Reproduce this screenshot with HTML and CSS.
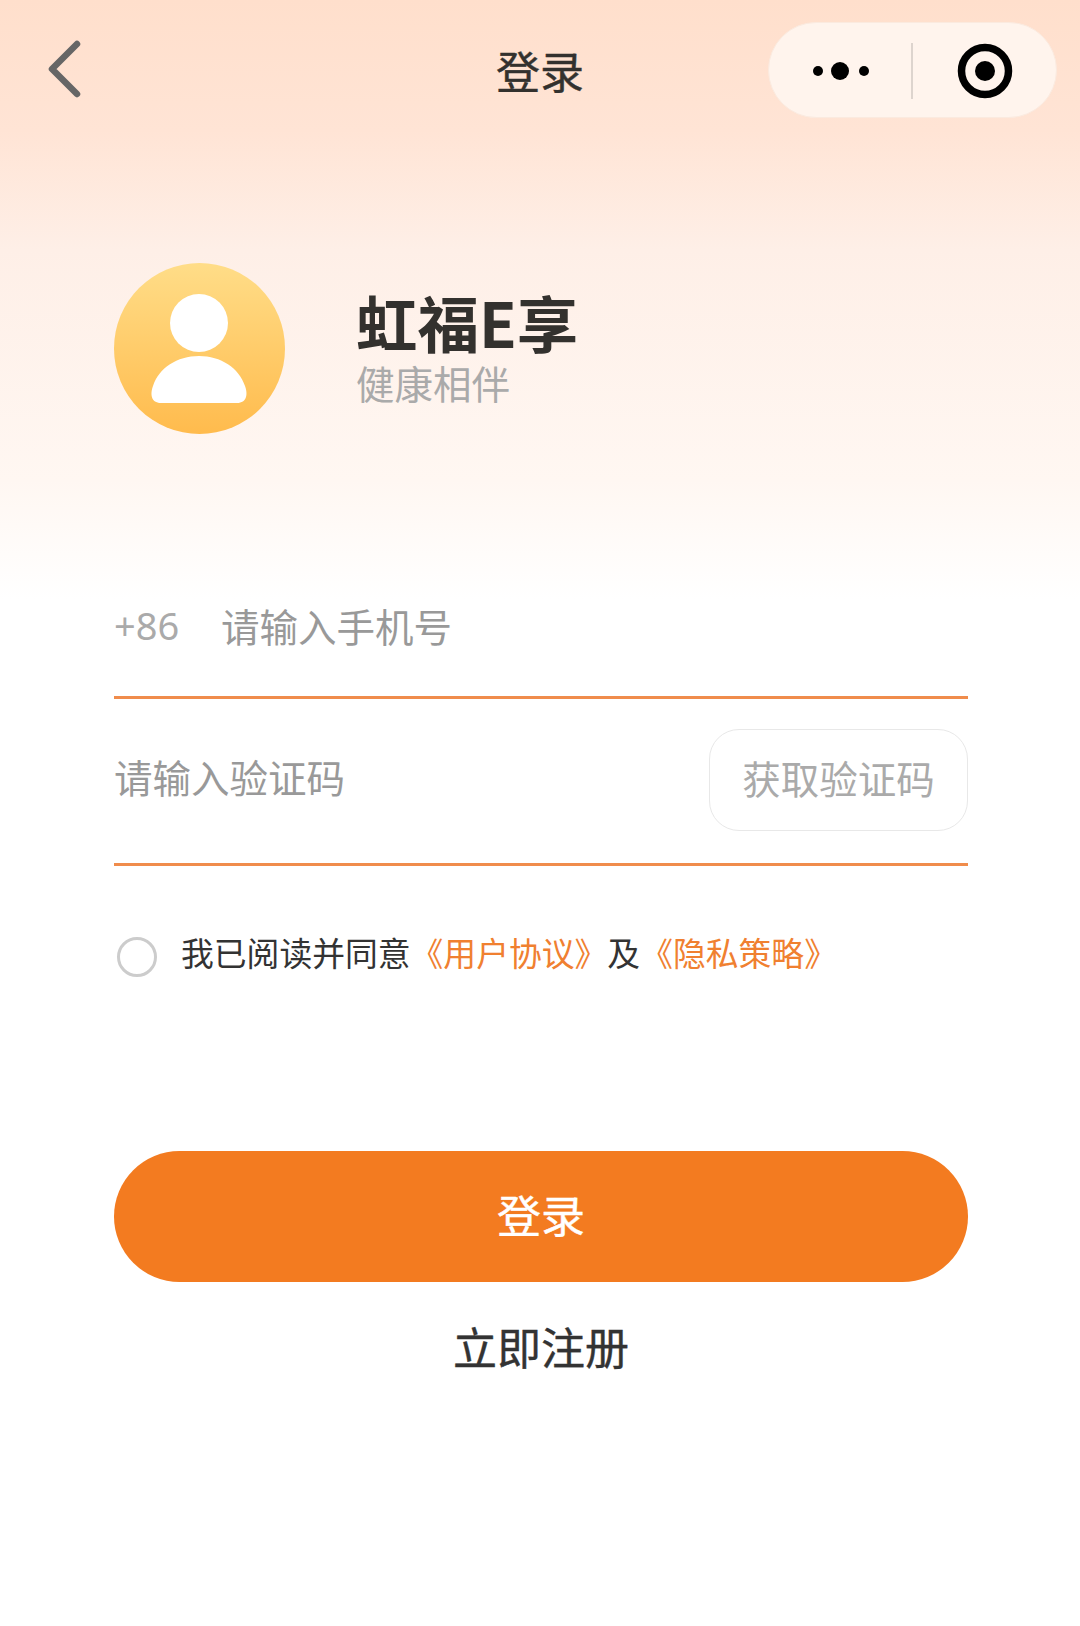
FILE: index.html
```html
<!DOCTYPE html>
<html lang="zh-CN">
<head>
    <meta charset="UTF-8">
    <meta name="viewport" content="width=device-width, initial-scale=1.0">
    <title>登录</title>
    <link rel="stylesheet" href="styles.css">
</head>
<body>
    <div class="page">
        <header class="nav">
            <a href="#" class="nav-back" aria-label="返回">
                <svg width="40" height="64" viewBox="0 0 40 64">
                    <path d="M35 7 L10 32 L35 57" fill="none" stroke="#666" stroke-width="6.5" stroke-linecap="round" stroke-linejoin="round"/>
                </svg>
            </a>
            <div class="nav-title">登录</div>
            <div class="capsule">
                <svg class="capsule-more" width="60" height="20" viewBox="0 0 60 20">
                    <circle cx="6" cy="10" r="5" fill="#000"/>
                    <circle cx="28" cy="10" r="9" fill="#000"/>
                    <circle cx="52" cy="10" r="5" fill="#000"/>
                </svg>
                <span class="capsule-line"></span>
                <svg class="capsule-close" width="56" height="56" viewBox="0 0 56 56">
                    <circle cx="28" cy="28" r="23.5" fill="none" stroke="#000" stroke-width="7.5"/>
                    <circle cx="28" cy="28" r="10" fill="#000"/>
                </svg>
            </div>
        </header>

        <section class="brand">
            <div class="avatar">
                <svg width="100" height="110" viewBox="0 0 100 110">
                    <circle cx="49" cy="29" r="29" fill="#fff"/>
                    <path d="M11 109 C1 109 0 100 3 92 C9 74 27 62 49 62 C71 62 89 74 95 92 C98 100 97 109 87 109 Z" fill="#fff"/>
                </svg>
            </div>
            <div class="brand-text">
                <div class="brand-name">虹福E享</div>
                <div class="brand-sub">健康相伴</div>
            </div>
        </section>

        <form class="form">
            <div class="field field-phone">
                <span class="code">+86</span>
                <span class="hint">请输入手机号</span>
            </div>
            <div class="field field-sms">
                <span class="hint">请输入验证码</span>
                <button type="button" class="btn-code">获取验证码</button>
            </div>
            <div class="agree">
                <span class="radio"></span>
                <span class="agree-text">我已阅读并同意<a href="#">《用户协议》</a>及<a href="#">《隐私策略》</a></span>
            </div>
            <button type="submit" class="btn-login">登录</button>
            <a href="#" class="register">立即注册</a>
        </form>
    </div>
</body>
</html>
```

FILE: styles.css
```css
* {
    box-sizing: border-box;
}
body {
    margin: 0;
    font-family: "Noto Sans CJK SC", "Liberation Sans", sans-serif;
    background-color: #fff;
}
a {
    text-decoration: none;
}
.page {
    height: 1626px;
    padding-top: 22px;
    background: linear-gradient(#ffdfcc 0, #ffe4d5 130px, #feefe7 250px, #fff7f2 480px, #fff 600px);
}

/* top bar */
.nav {
    display: grid;
    grid-template-columns: 1fr auto 1fr;
    align-items: center;
    height: 96px;
    padding: 0 23px;
}
.nav-back {
    display: flex;
    margin: -3px 0 0 19px;
}
.nav-title {
    font-size: 44px;
    color: #33312e;
    line-height: 96px;
    margin-top: 0;
    -webkit-text-stroke: 0.4px #33312e;
}
.capsule {
    justify-self: end;
    display: flex;
    align-items: center;
    width: 289px;
    height: 96px;
    padding: 2px 0 0 43px;
    background-color: #fff4ed;
    border: 1.5px solid #fbeadf;
    border-radius: 48px;
}
.capsule-more {
    flex: none;
}
.capsule-line {
    width: 1.5px;
    height: 56px;
    margin: 0 44px 0 39px;
    background-color: #ddd4ce;
}
.capsule-close {
    flex: none;
}

/* logo and name */
.brand {
    display: flex;
    align-items: center;
    margin: 145px 0 0 114px;
}
.avatar {
    display: flex;
    justify-content: center;
    align-items: center;
    width: 171px;
    height: 171px;
    border-radius: 50%;
    background: linear-gradient(#ffdd88, #ffbb4d);
}
.brand-text {
    margin-left: 71px;
    margin-top: -12px;
}
.brand-name {
    font-size: 61.5px;
    font-weight: 700;
    line-height: 78px;
    color: #33312e;
}
.brand-sub {
    font-size: 38.5px;
    line-height: 42px;
    color: #aaa;
}

/* form */
.form {
    display: flex;
    flex-direction: column;
    margin: 132px 112px 0 114px;
}
.field {
    display: flex;
    align-items: center;
    border-bottom: 3px solid #f08c4c;
    font-size: 38.5px;
    color: #999;
}
.field-phone {
    height: 133px;
    padding-bottom: 13px;
}
.code {
    width: 107px;
    font-size: 38px;
    color: #aaa;
    font-family: "Noto Sans", sans-serif;
}
.field-sms {
    justify-content: space-between;
    height: 167px;
    padding: 0 0 3px 0;
}
.field-sms .hint {
    margin-bottom: 8px;
}
.btn-code {
    width: 259px;
    height: 102px;
    padding: 0 0 6px;
    background-color: #fff;
    border: 1.5px solid #e8e8e8;
    border-radius: 30px;
    font-family: inherit;
    font-size: 38.5px;
    color: #aaa;
}
.agree {
    display: flex;
    align-items: center;
    height: 40px;
    margin: 71px 0 0 3px;
}
.radio {
    width: 40px;
    height: 40px;
    border: 3px solid #ccc;
    border-radius: 50%;
}
.agree-text {
    margin-left: 24px;
    margin-top: -12px;
    font-size: 32.8px;
    color: #333;
    white-space: nowrap;
}
.agree-text a {
    color: #f08030;
}
.btn-login {
    height: 131px;
    margin-top: 174px;
    padding: 0 0 6px;
    background-color: #f37b20;
    border: none;
    border-radius: 66px;
    font-family: inherit;
    font-size: 44px;
    -webkit-text-stroke: 0.4px #fff;
    color: #fff;
}
.register {
    margin-top: 34px;
    text-align: center;
    font-size: 44px;
    line-height: 60px;
    -webkit-text-stroke: 0.4px #333;
    color: #333;
}
```
